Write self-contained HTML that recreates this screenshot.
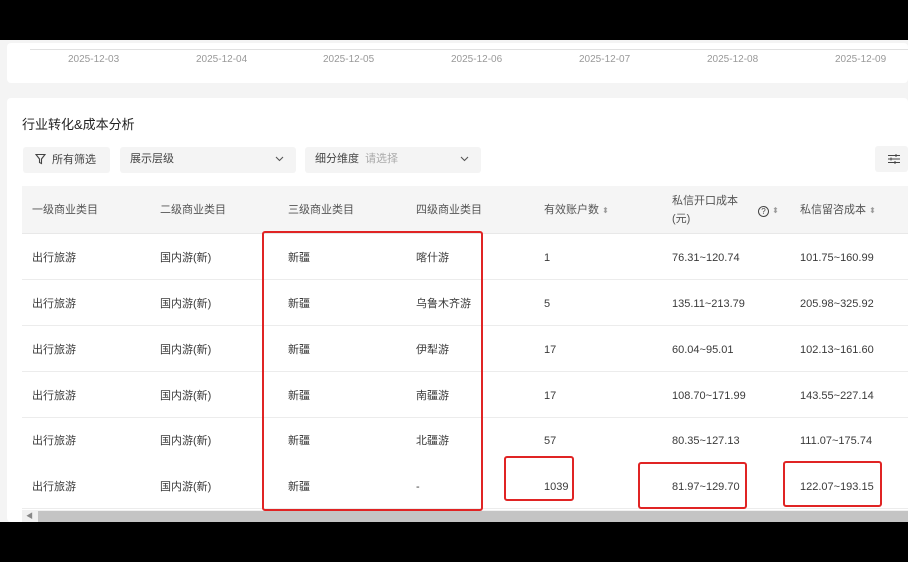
<!DOCTYPE html>
<html><head><meta charset="utf-8"><style>
*{margin:0;padding:0;box-sizing:border-box}
body{width:908px;height:562px;overflow:hidden;background:#f4f4f4;font-family:"Liberation Sans","Noto Sans CJK SC",sans-serif;color:#3a3a3a;position:relative}
.abs{position:absolute}
.t{position:absolute;font-size:11px;white-space:nowrap;line-height:14px}
.hd{color:#555}
.row{position:absolute;left:22px;width:886px;height:46px;border-bottom:1px solid #ececec;background:#fff}
.rb{position:absolute;border:2.5px solid #e02424;border-radius:3px}
.q{display:inline-block;width:11px;height:11px;border:1px solid #444;border-radius:50%;font-size:8px;line-height:9px;text-align:center;color:#444;vertical-align:-1px}
</style></head><body>
<div class="abs" style="left:0;top:0;width:908px;height:40px;background:#000"></div>
<div class="abs" style="left:7px;top:43px;width:901px;height:40px;background:#fff;border-radius:4px"></div>
<div class="abs" style="left:30px;top:49px;width:878px;height:1px;background:#e0e0e0"></div>
<div class="t" style="left:68px;top:53px;color:#999;font-size:10px">2025-12-03</div>
<div class="t" style="left:196px;top:53px;color:#999;font-size:10px">2025-12-04</div>
<div class="t" style="left:323px;top:53px;color:#999;font-size:10px">2025-12-05</div>
<div class="t" style="left:451px;top:53px;color:#999;font-size:10px">2025-12-06</div>
<div class="t" style="left:579px;top:53px;color:#999;font-size:10px">2025-12-07</div>
<div class="t" style="left:707px;top:53px;color:#999;font-size:10px">2025-12-08</div>
<div class="t" style="left:835px;top:53px;color:#999;font-size:10px">2025-12-09</div>
<div class="abs" style="left:7px;top:98px;width:901px;height:424px;background:#fff;border-radius:4px"></div>
<div class="t" style="left:22px;top:118px;font-size:13px;color:#222">行业转化&amp;成本分析</div>
<div class="abs" style="left:23px;top:147px;width:87px;height:26px;background:#f4f4f4;border-radius:3px"></div>
<svg class="abs" style="left:35px;top:153px" width="11" height="12" viewBox="0 0 11 12"><path d="M1 1.5h9L6.5 6v4.5L4.5 9.5V6z" fill="none" stroke="#444" stroke-width="1.1"/></svg>
<div class="t" style="left:52px;top:153px;color:#444">所有筛选</div>
<div class="abs" style="left:120px;top:147px;width:176px;height:26px;background:#f4f4f4;border-radius:3px"></div>
<div class="t" style="left:130px;top:152px;color:#444">展示层级</div>
<svg class="abs" style="left:275px;top:156px" width="9" height="6"><path d="M1 1l3.5 3.5L8 1" fill="none" stroke="#555" stroke-width="1.1"/></svg>
<div class="abs" style="left:305px;top:147px;width:176px;height:26px;background:#f4f4f4;border-radius:3px"></div>
<div class="t" style="left:315px;top:152px;color:#444">细分维度 <span style="color:#aaa;margin-left:3px">请选择</span></div>
<svg class="abs" style="left:460px;top:156px" width="9" height="6"><path d="M1 1l3.5 3.5L8 1" fill="none" stroke="#555" stroke-width="1.1"/></svg>
<div class="abs" style="left:875px;top:146px;width:33px;height:26px;background:#f4f4f4;border-radius:3px"></div>
<svg class="abs" style="left:888px;top:153px" width="12" height="12"><path d="M0 2.5h12M0 6h12M0 9.5h12M8 1v3M3 4.5v3M7 8v3" stroke="#444" stroke-width="1"/></svg>
<div class="abs" style="left:22px;top:186px;width:886px;height:48px;background:#f5f5f5;border-bottom:1px solid #e8e8e8"></div>
<div class="t hd" style="left:32px;top:203px">一级商业类目</div>
<div class="t hd" style="left:160px;top:203px">二级商业类目</div>
<div class="t hd" style="left:288px;top:203px">三级商业类目</div>
<div class="t hd" style="left:416px;top:203px">四级商业类目</div>
<div class="t hd" style="left:544px;top:203px">有效账户数 <span style="font-size:8px;color:#999">⬍</span></div>
<div class="t hd" style="left:672px;top:194px">私信开口成本</div>
<div class="t hd" style="left:672px;top:212px">(元)</div>
<div class="t hd" style="left:758px;top:203px"><span class="q">?</span> <span style="font-size:8px;color:#999">⬍</span></div>
<div class="t hd" style="left:800px;top:203px">私信留咨成本 <span style="font-size:8px;color:#999">⬍</span></div>

<div class="row" style="top:234px"></div>
<div class="row" style="top:280px"></div>
<div class="row" style="top:326px"></div>
<div class="row" style="top:372px"></div>
<div class="row" style="top:418px"></div>
<div class="row" style="top:463px"></div>

<div class="t" style="left:32px;top:251px">出行旅游</div><div class="t" style="left:160px;top:251px">国内游(新)</div><div class="t" style="left:288px;top:251px">新疆</div><div class="t" style="left:416px;top:251px">喀什游</div><div class="t" style="left:544px;top:251px">1</div><div class="t" style="left:672px;top:251px">76.31~120.74</div><div class="t" style="left:800px;top:251px">101.75~160.99</div>
<div class="t" style="left:32px;top:297px">出行旅游</div><div class="t" style="left:160px;top:297px">国内游(新)</div><div class="t" style="left:288px;top:297px">新疆</div><div class="t" style="left:416px;top:297px">乌鲁木齐游</div><div class="t" style="left:544px;top:297px">5</div><div class="t" style="left:672px;top:297px">135.11~213.79</div><div class="t" style="left:800px;top:297px">205.98~325.92</div>
<div class="t" style="left:32px;top:343px">出行旅游</div><div class="t" style="left:160px;top:343px">国内游(新)</div><div class="t" style="left:288px;top:343px">新疆</div><div class="t" style="left:416px;top:343px">伊犁游</div><div class="t" style="left:544px;top:343px">17</div><div class="t" style="left:672px;top:343px">60.04~95.01</div><div class="t" style="left:800px;top:343px">102.13~161.60</div>
<div class="t" style="left:32px;top:389px">出行旅游</div><div class="t" style="left:160px;top:389px">国内游(新)</div><div class="t" style="left:288px;top:389px">新疆</div><div class="t" style="left:416px;top:389px">南疆游</div><div class="t" style="left:544px;top:389px">17</div><div class="t" style="left:672px;top:389px">108.70~171.99</div><div class="t" style="left:800px;top:389px">143.55~227.14</div>
<div class="t" style="left:32px;top:434px">出行旅游</div><div class="t" style="left:160px;top:434px">国内游(新)</div><div class="t" style="left:288px;top:434px">新疆</div><div class="t" style="left:416px;top:434px">北疆游</div><div class="t" style="left:544px;top:434px">57</div><div class="t" style="left:672px;top:434px">80.35~127.13</div><div class="t" style="left:800px;top:434px">111.07~175.74</div>
<div class="t" style="left:32px;top:480px">出行旅游</div><div class="t" style="left:160px;top:480px">国内游(新)</div><div class="t" style="left:288px;top:480px">新疆</div><div class="t" style="left:416px;top:480px">-</div><div class="t" style="left:544px;top:480px">1039</div><div class="t" style="left:672px;top:480px">81.97~129.70</div><div class="t" style="left:800px;top:480px">122.07~193.15</div>

<div class="abs" style="left:22px;top:510px;width:886px;height:12px;background:#f0f0f0"></div>
<div class="abs" style="left:38px;top:511px;width:870px;height:11px;background:#c4c4c4"></div>
<div class="t" style="left:26px;top:510px;font-size:7px;color:#888">◀</div>
<div class="abs" style="left:0;top:522px;width:908px;height:40px;background:#000"></div>

<div class="rb" style="left:262px;top:231px;width:221px;height:280px"></div>
<div class="rb" style="left:504px;top:456px;width:70px;height:45px"></div>
<div class="rb" style="left:638px;top:462px;width:109px;height:47px"></div>
<div class="rb" style="left:783px;top:461px;width:99px;height:46px"></div>
</body></html>
